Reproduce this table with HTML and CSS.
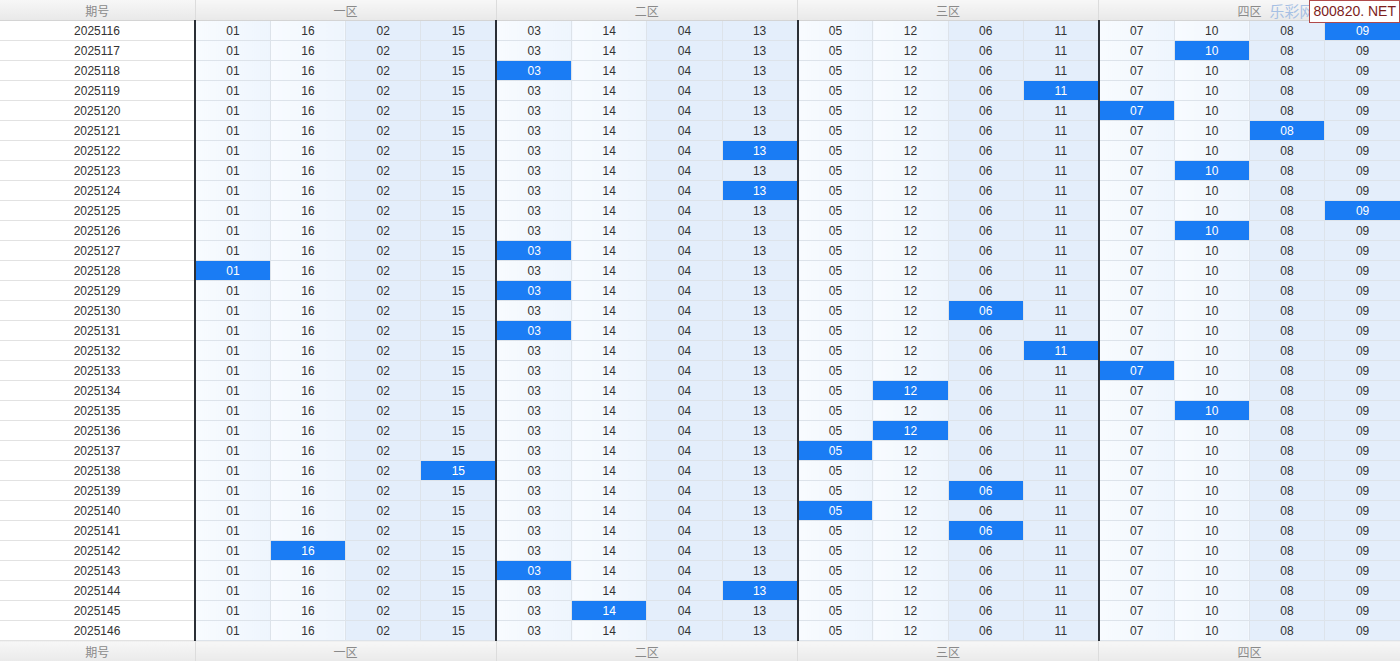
FILE: index.html
```html
<!DOCTYPE html>
<html>
<head>
<meta charset="utf-8">
<link rel="stylesheet" href="styles.css">
</head>
<body>
<div class="wrap">
<table class="grid">
<colgroup><col class="c-no"><col span="16"></colgroup>
<thead><tr><th>期号</th><th colspan="4">一区</th><th colspan="4">二区</th><th colspan="4">三区</th><th colspan="4">四区</th></tr></thead>
<tbody>
<tr><td>2025116</td><td>01</td><td>16</td><td>02</td><td>15</td><td>03</td><td>14</td><td>04</td><td>13</td><td>05</td><td>12</td><td>06</td><td>11</td><td>07</td><td>10</td><td>08</td><td class="h">09</td></tr>
<tr><td>2025117</td><td>01</td><td>16</td><td>02</td><td>15</td><td>03</td><td>14</td><td>04</td><td>13</td><td>05</td><td>12</td><td>06</td><td>11</td><td>07</td><td class="h">10</td><td>08</td><td>09</td></tr>
<tr><td>2025118</td><td>01</td><td>16</td><td>02</td><td>15</td><td class="h">03</td><td>14</td><td>04</td><td>13</td><td>05</td><td>12</td><td>06</td><td>11</td><td>07</td><td>10</td><td>08</td><td>09</td></tr>
<tr><td>2025119</td><td>01</td><td>16</td><td>02</td><td>15</td><td>03</td><td>14</td><td>04</td><td>13</td><td>05</td><td>12</td><td>06</td><td class="h">11</td><td>07</td><td>10</td><td>08</td><td>09</td></tr>
<tr><td>2025120</td><td>01</td><td>16</td><td>02</td><td>15</td><td>03</td><td>14</td><td>04</td><td>13</td><td>05</td><td>12</td><td>06</td><td>11</td><td class="h">07</td><td>10</td><td>08</td><td>09</td></tr>
<tr><td>2025121</td><td>01</td><td>16</td><td>02</td><td>15</td><td>03</td><td>14</td><td>04</td><td>13</td><td>05</td><td>12</td><td>06</td><td>11</td><td>07</td><td>10</td><td class="h">08</td><td>09</td></tr>
<tr><td>2025122</td><td>01</td><td>16</td><td>02</td><td>15</td><td>03</td><td>14</td><td>04</td><td class="h">13</td><td>05</td><td>12</td><td>06</td><td>11</td><td>07</td><td>10</td><td>08</td><td>09</td></tr>
<tr><td>2025123</td><td>01</td><td>16</td><td>02</td><td>15</td><td>03</td><td>14</td><td>04</td><td>13</td><td>05</td><td>12</td><td>06</td><td>11</td><td>07</td><td class="h">10</td><td>08</td><td>09</td></tr>
<tr><td>2025124</td><td>01</td><td>16</td><td>02</td><td>15</td><td>03</td><td>14</td><td>04</td><td class="h">13</td><td>05</td><td>12</td><td>06</td><td>11</td><td>07</td><td>10</td><td>08</td><td>09</td></tr>
<tr><td>2025125</td><td>01</td><td>16</td><td>02</td><td>15</td><td>03</td><td>14</td><td>04</td><td>13</td><td>05</td><td>12</td><td>06</td><td>11</td><td>07</td><td>10</td><td>08</td><td class="h">09</td></tr>
<tr><td>2025126</td><td>01</td><td>16</td><td>02</td><td>15</td><td>03</td><td>14</td><td>04</td><td>13</td><td>05</td><td>12</td><td>06</td><td>11</td><td>07</td><td class="h">10</td><td>08</td><td>09</td></tr>
<tr><td>2025127</td><td>01</td><td>16</td><td>02</td><td>15</td><td class="h">03</td><td>14</td><td>04</td><td>13</td><td>05</td><td>12</td><td>06</td><td>11</td><td>07</td><td>10</td><td>08</td><td>09</td></tr>
<tr><td>2025128</td><td class="h">01</td><td>16</td><td>02</td><td>15</td><td>03</td><td>14</td><td>04</td><td>13</td><td>05</td><td>12</td><td>06</td><td>11</td><td>07</td><td>10</td><td>08</td><td>09</td></tr>
<tr><td>2025129</td><td>01</td><td>16</td><td>02</td><td>15</td><td class="h">03</td><td>14</td><td>04</td><td>13</td><td>05</td><td>12</td><td>06</td><td>11</td><td>07</td><td>10</td><td>08</td><td>09</td></tr>
<tr><td>2025130</td><td>01</td><td>16</td><td>02</td><td>15</td><td>03</td><td>14</td><td>04</td><td>13</td><td>05</td><td>12</td><td class="h">06</td><td>11</td><td>07</td><td>10</td><td>08</td><td>09</td></tr>
<tr><td>2025131</td><td>01</td><td>16</td><td>02</td><td>15</td><td class="h">03</td><td>14</td><td>04</td><td>13</td><td>05</td><td>12</td><td>06</td><td>11</td><td>07</td><td>10</td><td>08</td><td>09</td></tr>
<tr><td>2025132</td><td>01</td><td>16</td><td>02</td><td>15</td><td>03</td><td>14</td><td>04</td><td>13</td><td>05</td><td>12</td><td>06</td><td class="h">11</td><td>07</td><td>10</td><td>08</td><td>09</td></tr>
<tr><td>2025133</td><td>01</td><td>16</td><td>02</td><td>15</td><td>03</td><td>14</td><td>04</td><td>13</td><td>05</td><td>12</td><td>06</td><td>11</td><td class="h">07</td><td>10</td><td>08</td><td>09</td></tr>
<tr><td>2025134</td><td>01</td><td>16</td><td>02</td><td>15</td><td>03</td><td>14</td><td>04</td><td>13</td><td>05</td><td class="h">12</td><td>06</td><td>11</td><td>07</td><td>10</td><td>08</td><td>09</td></tr>
<tr><td>2025135</td><td>01</td><td>16</td><td>02</td><td>15</td><td>03</td><td>14</td><td>04</td><td>13</td><td>05</td><td>12</td><td>06</td><td>11</td><td>07</td><td class="h">10</td><td>08</td><td>09</td></tr>
<tr><td>2025136</td><td>01</td><td>16</td><td>02</td><td>15</td><td>03</td><td>14</td><td>04</td><td>13</td><td>05</td><td class="h">12</td><td>06</td><td>11</td><td>07</td><td>10</td><td>08</td><td>09</td></tr>
<tr><td>2025137</td><td>01</td><td>16</td><td>02</td><td>15</td><td>03</td><td>14</td><td>04</td><td>13</td><td class="h">05</td><td>12</td><td>06</td><td>11</td><td>07</td><td>10</td><td>08</td><td>09</td></tr>
<tr><td>2025138</td><td>01</td><td>16</td><td>02</td><td class="h">15</td><td>03</td><td>14</td><td>04</td><td>13</td><td>05</td><td>12</td><td>06</td><td>11</td><td>07</td><td>10</td><td>08</td><td>09</td></tr>
<tr><td>2025139</td><td>01</td><td>16</td><td>02</td><td>15</td><td>03</td><td>14</td><td>04</td><td>13</td><td>05</td><td>12</td><td class="h">06</td><td>11</td><td>07</td><td>10</td><td>08</td><td>09</td></tr>
<tr><td>2025140</td><td>01</td><td>16</td><td>02</td><td>15</td><td>03</td><td>14</td><td>04</td><td>13</td><td class="h">05</td><td>12</td><td>06</td><td>11</td><td>07</td><td>10</td><td>08</td><td>09</td></tr>
<tr><td>2025141</td><td>01</td><td>16</td><td>02</td><td>15</td><td>03</td><td>14</td><td>04</td><td>13</td><td>05</td><td>12</td><td class="h">06</td><td>11</td><td>07</td><td>10</td><td>08</td><td>09</td></tr>
<tr><td>2025142</td><td>01</td><td class="h">16</td><td>02</td><td>15</td><td>03</td><td>14</td><td>04</td><td>13</td><td>05</td><td>12</td><td>06</td><td>11</td><td>07</td><td>10</td><td>08</td><td>09</td></tr>
<tr><td>2025143</td><td>01</td><td>16</td><td>02</td><td>15</td><td class="h">03</td><td>14</td><td>04</td><td>13</td><td>05</td><td>12</td><td>06</td><td>11</td><td>07</td><td>10</td><td>08</td><td>09</td></tr>
<tr><td>2025144</td><td>01</td><td>16</td><td>02</td><td>15</td><td>03</td><td>14</td><td>04</td><td class="h">13</td><td>05</td><td>12</td><td>06</td><td>11</td><td>07</td><td>10</td><td>08</td><td>09</td></tr>
<tr><td>2025145</td><td>01</td><td>16</td><td>02</td><td>15</td><td>03</td><td class="h">14</td><td>04</td><td>13</td><td>05</td><td>12</td><td>06</td><td>11</td><td>07</td><td>10</td><td>08</td><td>09</td></tr>
<tr><td>2025146</td><td>01</td><td>16</td><td>02</td><td>15</td><td>03</td><td>14</td><td>04</td><td>13</td><td>05</td><td>12</td><td>06</td><td>11</td><td>07</td><td>10</td><td>08</td><td>09</td></tr>
</tbody>
<tfoot><tr><th>期号</th><th colspan="4">一区</th><th colspan="4">二区</th><th colspan="4">三区</th><th colspan="4">四区</th></tr></tfoot>
</table>
<div class="mark"><span class="mark-cn">乐彩网</span><span class="mark-box">800820. NET</span></div>
</div>
</body>
</html>
```

FILE: styles.css
```css
html, body {
  margin: 0;
  padding: 0;
  background: #fff;
}
.wrap {
  position: relative;
  width: 1400px;
  height: 661px;
  overflow: hidden;
}
.grid {
  width: 1400px;
  table-layout: fixed;
  border-collapse: collapse;
  font-family: "Liberation Sans", Arial, "Noto Sans CJK SC", sans-serif;
  font-size: 12px;
  color: #333;
}
.c-no { width: 195px; }
.grid th {
  height: 20px;
  padding: 0;
  font-weight: normal;
  color: #8a8a8a;
  font-family: "Noto Sans CJK SC", "Liberation Sans", sans-serif;
  font-size: 12px;
  background: linear-gradient(#f7f7f7, #e9e9e9);
  border-left: 1px solid #dcdcdc;
  border-bottom: 1px solid #d4d4d4;
  text-align: center;
  line-height: 19px;
}
.grid tfoot th {
  height: 21px;
  border-bottom: 0;
  border-top: 1px solid #cfcfcf;
}
.grid th:first-child { border-left: 0; }
.grid td {
  height: 17px;
  padding: 2px 0 0 0;
  line-height: 17px;
  text-align: center;
  border: 1px solid #dde3ea;
  white-space: nowrap;
}
.grid td:first-child {
  border-left: 0;
  background: #fff;
  border-color: #e2e2e2;
}
.grid td:nth-child(4n+2),
.grid td:nth-child(4n+3) {
  background: linear-gradient(90deg, #f8fbff, #eef5fd);
}
.grid td:nth-child(4n+4),
.grid td:nth-child(4n+5) {
  background: #e4eefb;
}
.grid td:nth-child(4n+2) {
  border-left: 2px solid #2b2f36;
}
.grid td:last-child { border-right: 0; }
.grid td.h {
  background: #1a7cf4;
  color: #fff;
}
.mark {
  position: absolute;
  top: 0;
  right: 0;
  display: flex;
  align-items: flex-start;
  font-family: "Noto Sans CJK SC", "Liberation Sans", sans-serif;
}
.mark-cn {
  color: #a6c0e4;
  font-size: 15px;
  line-height: 22px;
  margin-right: -6px;
  white-space: nowrap;
}
.mark-box {
  position: relative;
  z-index: 1;
  background: #fff;
  border: 1px solid #b04a4a;
  color: #7d1d1d;
  font-family: "Liberation Sans Narrow", "Liberation Sans", Arial, sans-serif;
  font-size: 14px;
  line-height: 21px;
  padding: 0 3px 0 4px;
  height: 21px;
}
```
